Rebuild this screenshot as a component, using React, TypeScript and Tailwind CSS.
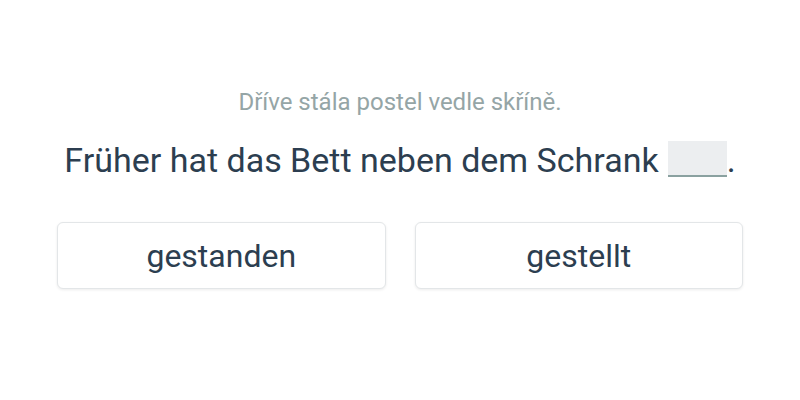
export default function App() {
  return (
    <div
      className="w-[800px] h-[400px] bg-white flex flex-col items-center"
      style={{ fontFamily: "Roboto, 'Noto Sans', sans-serif" }}
    >
      <p className="mt-[86px] text-[24px] leading-[32px] text-[#95a5a6]">
        Dříve stála postel vedle skříně.
      </p>
      <p className="mt-[20px] text-[34px] leading-[44px] text-[#2c3e50] flex items-end">
        <span>Früher hat das Bett neben dem Schrank</span>
        <span className="ml-[9px] inline-block w-[59px] h-[36px] bg-[#eceef0] border-b-[2px] border-[#8aa1a0] mb-[5px]" />
        <span>.</span>
      </p>
      <div className="mt-[40px] w-full px-[57px] grid grid-cols-2 gap-[29px]">
        {["gestanden", "gestellt"].map((w) => (
          <button
            key={w}
            className="h-[67px] rounded-[6px] border border-[#e3e6e8] bg-white shadow-[0_1px_3px_rgba(0,0,0,0.08)] text-[32px] text-[#2c3e50]"
          >
            {w}
          </button>
        ))}
      </div>
    </div>
  );
}
